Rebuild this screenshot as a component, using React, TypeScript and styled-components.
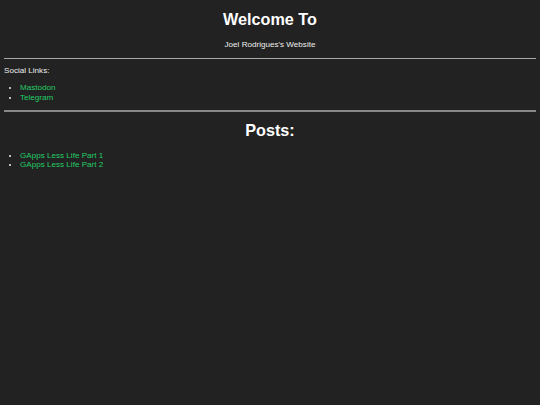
import { createGlobalStyle } from "styled-components";
import styled from "styled-components";

const GlobalStyle = createGlobalStyle`
  html, body {
    background: #222222;
  }
  body {
    margin: 4px;
    padding-top: 6px;
    color: #eeeeee;
    font-family: "Liberation Sans", Arial, sans-serif;
    font-size: 8.1px;
    line-height: 1.15;
  }
`;

const Title = styled.h1<{ $gapTop?: number }>`
  text-align: center;
  font-size: 2em;
  font-weight: bold;
  margin: ${(p) => p.$gapTop ?? 0}px 0 0;
  color: #ffffff;
`;

const Subtitle = styled.p`
  text-align: center;
  margin: 11px 0 9px;
`;

const Rule = styled.hr<{ $thick?: boolean }>`
  border: none;
  height: ${(p) => (p.$thick ? "2px" : "1px")};
  background: ${(p) => (p.$thick ? "#888888" : "#a8a8a8")};
  margin: 0;
`;

const Label = styled.p`
  margin: 7.5px 0 0;
`;

const LinkList = styled.ul<{ $gapTop: number }>`
  margin: ${(p) => p.$gapTop}px 0 8px;
  padding-left: 16px;
  list-style: disc;
`;

const Link = styled.a`
  color: #22cc66;
  text-decoration: none;
`;

const social = ["Mastodon", "Telegram"];
const posts = ["GApps Less Life Part 1", "GApps Less Life Part 2"];

export default function App() {
  return (
    <>
      <GlobalStyle />
      <Title>Welcome To</Title>
      <Subtitle>Joel Rodrigues's Website</Subtitle>
      <Rule />
      <Label>Social Links:</Label>
      <LinkList $gapTop={7.5}>
        {social.map((s) => (
          <li key={s}>
            <Link href="#">{s}</Link>
          </li>
        ))}
      </LinkList>
      <Rule $thick />
      <Title $gapTop={9.5}>Posts:</Title>
      <LinkList $gapTop={11}>
        {posts.map((p) => (
          <li key={p}>
            <Link href="#">{p}</Link>
          </li>
        ))}
      </LinkList>
    </>
  );
}
